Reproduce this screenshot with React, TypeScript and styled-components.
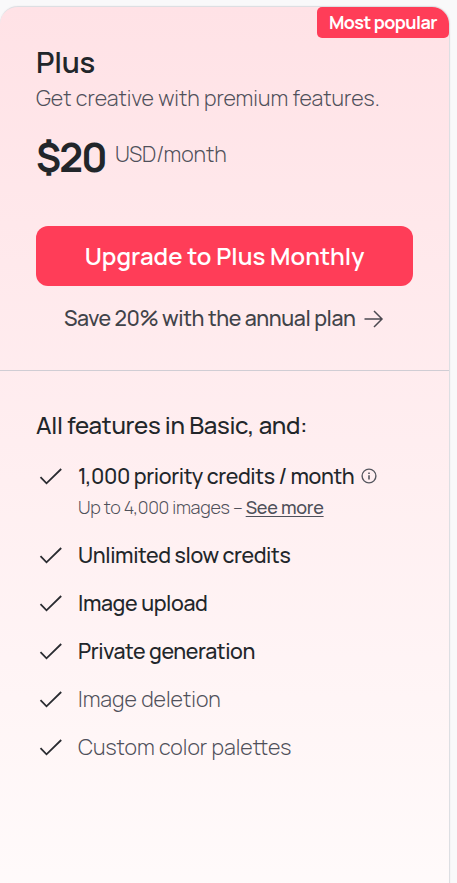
import React from "react";
import styled, { createGlobalStyle } from "styled-components";

const GlobalStyle = createGlobalStyle`
  * { box-sizing: border-box; }
  body {
    margin: 0;
    overflow: hidden;
    background: #f9f9fa;
    color: #22262a;
    font-family: Manrope, Inter, sans-serif;
  }
  h2, h3, p, ul { margin: 0; padding: 0; font-weight: inherit; }
  button { font-family: inherit; border: 0; padding: 0; cursor: pointer; background: none; }
`;

const Page = styled.div`
  width: 457px;
  height: 883px;
  padding-top: 6px;
  overflow: hidden;
`;

const Card = styled.main`
  position: relative;
  width: 450px;
  height: 910px;
  border: 1px solid #dddfe3;
  border-left: 0;
  border-radius: 18px 18px 0 0;
  background: linear-gradient(#ffe2e6, #fffbfb);
  box-shadow: 0 0 2px #00000010;
`;

const Badge = styled.div`
  position: absolute;
  top: 0;
  right: 0;
  width: 132px;
  height: 31px;
  border-radius: 5px 17px 5px 5px;
  background: #ff3d58;
  color: #fff;
  font-size: 18px;
  font-weight: 700;
  line-height: 31px;
  letter-spacing: -0.55px;
  text-align: center;
  white-space: nowrap;
`;

const Summary = styled.header`
  height: 364px;
  padding: 37px 36px 0;
  border-bottom: 1px solid #d0cdd4;
`;

const PlanName = styled.h2`
  font-size: 29.33px;
  font-weight: 640;
  line-height: 36px;
  letter-spacing: -0.25px;
`;

const Tagline = styled.p`
  margin-top: 3px;
  color: #4f505a;
  font-size: 21.33px;
  font-weight: 320;
  line-height: 30px;
  white-space: nowrap;
`;

const PriceRow = styled.div`
  display: flex;
  margin-top: 21px;
  height: 48px;
  white-space: nowrap;
`;

const Price = styled.span`
  width: 77px;
  font-size: 40px;
  font-weight: 680;
  line-height: 46px;
  letter-spacing: -1.9px;
`;

const Period = styled.span`
  margin-left: 2px;
  margin-top: 6px;
  color: #4f505a;
  font-size: 21.33px;
  font-weight: 310;
  line-height: 28px;
`;

const UpgradeButton = styled.button`
  display: block;
  width: 377px;
  height: 60px;
  margin-top: 44px;
  padding-bottom: 2px;
  border-radius: 12px;
  background: #ff3d58;
  color: #fff;
  font-size: 24px;
  font-weight: 600;
`;

const AnnualLink = styled.button`
  display: flex;
  align-items: center;
  gap: 8px;
  height: 28px;
  margin: 18px 0 0 28px;
  color: #414349;
  font-size: 21.33px;
  font-weight: 500;
  line-height: 28px;
  letter-spacing: -0.41px;
  white-space: nowrap;
`;

const Features = styled.section`
  padding: 37px 36px 0;
`;

const FeaturesTitle = styled.h3`
  font-size: 24px;
  font-weight: 500;
  line-height: 34px;
  letter-spacing: -0.3px;
  white-space: nowrap;
`;

const FeatureList = styled.ul`
  display: flex;
  flex-direction: column;
  gap: 20px;
  margin-top: 20px;
  list-style: none;
`;

const Feature = styled.li`
  display: grid;
  grid-template-columns: 42px 1fr;
`;

const CheckIcon = styled.svg`
  width: 30px;
  height: 28px;
`;

const FeatureName = styled.div<{ $strong: boolean }>`
  display: flex;
  align-items: center;
  height: 28px;
  padding-bottom: 2px;
  color: ${p => (p.$strong ? "#22262a" : "#4f505a")};
  font-size: 21.33px;
  font-weight: ${p => (p.$strong ? 500 : 310)};
  letter-spacing: ${p => (p.$strong ? "-0.38px" : "0")};
  white-space: nowrap;
`;

const InfoIcon = styled.svg`
  width: 16px;
  height: 16px;
  margin: 1px 0 0 7px;
`;

const FeatureNote = styled.p`
  grid-column: 2;
  margin: 5px 0 2px;
  color: #4f505a;
  font-size: 18px;
  font-weight: 310;
  line-height: 24px;
  letter-spacing: -0.29px;
  white-space: nowrap;
`;

const SeeMore = styled.a`
  font-weight: 500;
  letter-spacing: -0.22px;
  text-decoration: underline;
  text-decoration-thickness: 1px;
  text-underline-offset: 2px;
`;

interface FeatureData {
  name: string;
  strong: boolean;
  detailed?: boolean;
}

const features: FeatureData[] = [
  { name: "1,000 priority credits / month", strong: true, detailed: true },
  { name: "Unlimited slow credits", strong: true },
  { name: "Image upload", strong: true },
  { name: "Private generation", strong: true },
  { name: "Image deletion", strong: false },
  { name: "Custom color palettes", strong: false },
];

export default function App() {
  return (
    <>
      <GlobalStyle />
      <Page>
        <Card>
          <Badge>Most popular</Badge>
          <Summary>
            <PlanName>Plus</PlanName>
            <Tagline>Get creative with premium features.</Tagline>
            <PriceRow>
              <Price>$20</Price>
              <Period>USD/month</Period>
            </PriceRow>
            <UpgradeButton>Upgrade to Plus Monthly</UpgradeButton>
            <AnnualLink>
              <span>Save 20% with the annual plan</span>
              <svg width="20" height="20" viewBox="0 0 20 20" fill="none" stroke="#4b4950" strokeWidth="1.5">
                <path d="M0.5 11H18M10 3L18 11L10 19" />
              </svg>
            </AnnualLink>
          </Summary>
          <Features>
            <FeaturesTitle>All features in Basic, and:</FeaturesTitle>
            <FeatureList>
              {features.map(f => (
                <Feature key={f.name}>
                  <CheckIcon viewBox="0 0 30 28" fill="none" stroke="#292b30" strokeWidth="1.8">
                    <path d="M4.5 15.2L10.5 21.3L25.2 7" />
                  </CheckIcon>
                  <FeatureName $strong={f.strong}>
                    {f.name}
                    {f.detailed && (
                      <InfoIcon viewBox="0 0 16 16" fill="none" stroke="#55565f" strokeWidth="1.4">
                        <circle cx="8" cy="8" r="6.9" />
                        <path d="M8 7.3V11.6M8 4.5V6" strokeWidth="1.6" />
                      </InfoIcon>
                    )}
                  </FeatureName>
                  {f.detailed && (
                    <FeatureNote>
                      Up to 4,000 images – <SeeMore>See more</SeeMore>
                    </FeatureNote>
                  )}
                </Feature>
              ))}
            </FeatureList>
          </Features>
        </Card>
      </Page>
    </>
  );
}
